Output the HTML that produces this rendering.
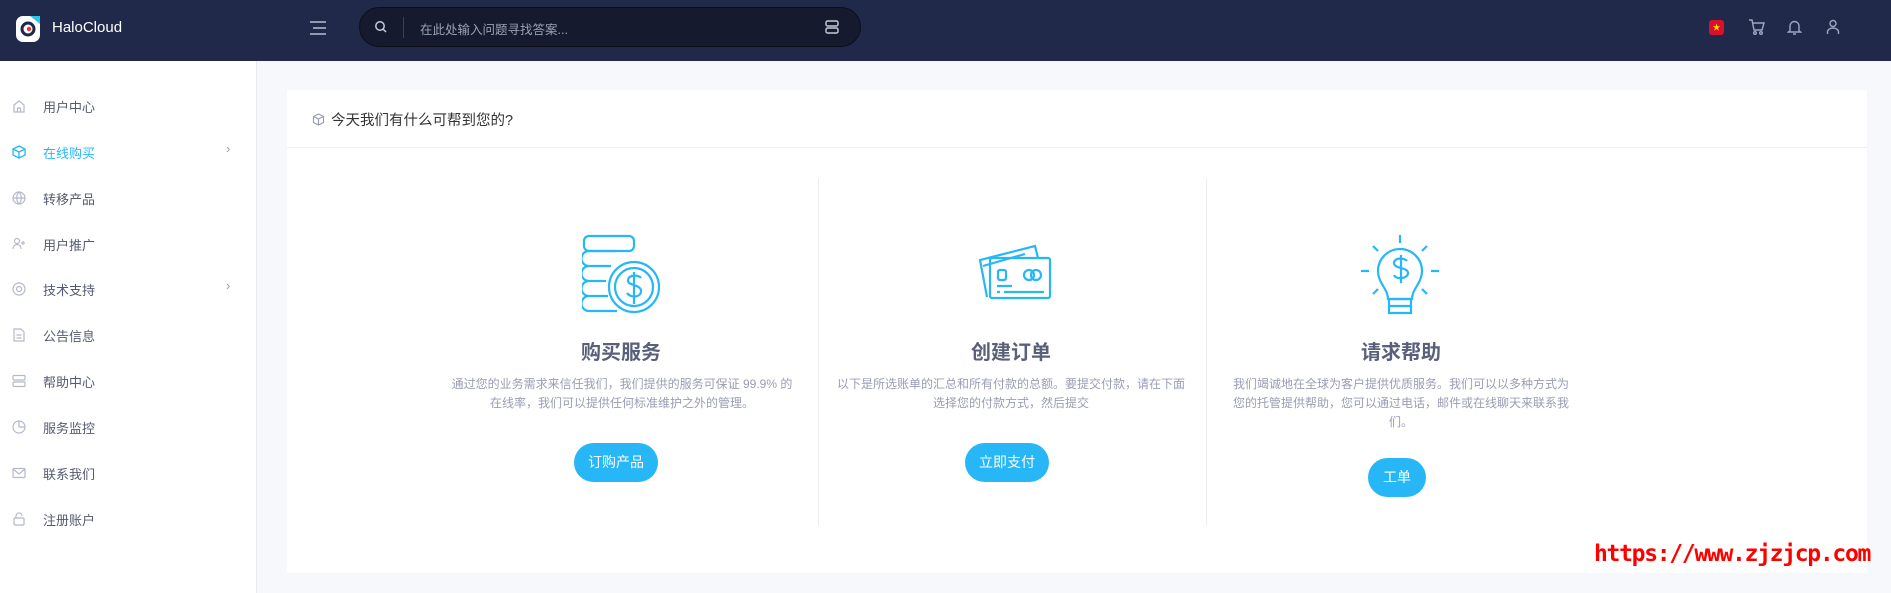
<!DOCTYPE html>
<html><head><meta charset="utf-8"><style>
*{box-sizing:border-box;margin:0;padding:0}
body{width:1891px;height:593px;overflow:hidden;background:#f7f8fb;font-family:"Liberation Sans","Noto Sans CJK SC",sans-serif;position:relative}
.hdr{position:absolute;left:0;top:0;width:1891px;height:61px;background:#21294a}
.abs{position:absolute}
.side{position:absolute;left:0;top:61px;width:257px;height:532px;background:#fff;border-right:1px solid #e9ebf0}
.it{position:absolute;left:0;height:20px;font-size:13px;color:#555a70;width:257px}
.it svg{position:absolute;left:12px;top:2px}
.it span{position:absolute;left:43px;top:0px}
.it .ch{position:absolute;left:226px;top:-2px;color:#999;font-size:13px}
.card{position:absolute;left:287px;top:90px;width:1580px;height:483px;background:#fff}
.ttl{position:absolute;font-size:20px;font-weight:bold;color:#5b607a;text-align:center;width:400px}
.desc{position:absolute;font-size:12px;color:#9a9db3;text-align:center;line-height:19px}
.btn{position:absolute;background:#27b7f7;color:#fff;font-size:14px;border-radius:20px;text-align:center;height:39px;line-height:39px}
</style></head><body>
<div class="hdr">
 <svg class="abs" style="left:16px;top:16px" width="28" height="26" viewBox="0 0 28 26"><rect x="0" y="0" width="24" height="26" rx="7" fill="#fff"/><path d="M14 0 L24 0 L24 8 Z" fill="#2ec5ea"/><circle cx="12" cy="13" r="6" fill="none" stroke="#21294a" stroke-width="3"/><circle cx="13" cy="13" r="2.2" fill="#e33"/></svg>
 <div class="abs" style="left:52px;top:19px;color:#fff;font-size:15px">HaloCloud</div>
 <svg class="abs" style="left:309px;top:19px" width="18" height="18"><path d="M1 3h16M4 9h13M1 15h16" stroke="#b9bed3" stroke-width="1.6"/></svg>
 <div class="abs" style="left:359px;top:7px;width:502px;height:40px;border-radius:20px;background:#151a2e;border:1px solid #0b0e1a"></div>
 <svg class="abs" style="left:374px;top:20px" width="14" height="14"><circle cx="6" cy="6" r="4.2" fill="none" stroke="#c7cbd9" stroke-width="1.5"/><path d="M9 9l3 3" stroke="#c7cbd9" stroke-width="1.5"/></svg>
 <div class="abs" style="left:403px;top:17px;width:1px;height:21px;background:#3a405a"></div>
 <div class="abs" style="left:420px;top:19px;color:#9ca1b6;font-size:12.5px">在此处输入问题寻找答案...</div>
 <svg class="abs" style="left:825px;top:20px" width="14" height="14"><rect x="1" y="1" width="12" height="5" rx="1.5" fill="none" stroke="#c7cbd9" stroke-width="1.4"/><rect x="1" y="8" width="12" height="5" rx="1.5" fill="none" stroke="#c7cbd9" stroke-width="1.4"/></svg>
 <div class="abs" style="left:1709px;top:20px;width:15px;height:15px;border-radius:3px;background:#d8102b;color:#ffde00;font-size:8px;line-height:15px;text-align:center">★</div>
 <svg class="abs" style="left:1748px;top:19px" width="17" height="16" fill="none" stroke="#a0a6c0" stroke-width="1.4"><path d="M1 1h3l2 10h8l2-7H5"/><circle cx="7" cy="14" r="1.3"/><circle cx="13" cy="14" r="1.3"/></svg>
 <svg class="abs" style="left:1787px;top:19px" width="15" height="16" fill="none" stroke="#a0a6c0" stroke-width="1.4"><path d="M3 12V7a4.5 4.5 0 0 1 9 0v5l1.5 1h-12z M6 15h3"/></svg>
 <svg class="abs" style="left:1826px;top:19px" width="14" height="16" fill="none" stroke="#a0a6c0" stroke-width="1.4"><circle cx="7" cy="4.5" r="3"/><path d="M1.5 15v-2a5.5 4 0 0 1 11 0v2"/></svg>
</div>
<div class="side">
 <div class="it" style="top:36px"><svg width="14" height="14" fill="none" stroke="#b5b9c8" stroke-width="1.2"><path d="M2 6l5-4 5 4v7H2zM5.5 13V9h3v4"/></svg><span>用户中心</span></div>
 <div class="it" style="top:82px;color:#27b7f7"><svg width="14" height="14" fill="none" stroke="#27b7f7" stroke-width="1.3"><path d="M7 1l6 3v6l-6 3-6-3V4zM1 4l6 3 6-3M7 7v6"/></svg><span>在线购买</span><b class="ch" style="font-weight:normal">›</b></div>
 <div class="it" style="top:128px"><svg width="14" height="14" fill="none" stroke="#b5b9c8" stroke-width="1.2"><circle cx="7" cy="7" r="6"/><path d="M1 7h12M7 1c3 3 3 9 0 12M7 1c-3 3-3 9 0 12"/></svg><span>转移产品</span></div>
 <div class="it" style="top:174px"><svg width="14" height="14" fill="none" stroke="#b5b9c8" stroke-width="1.2"><circle cx="5" cy="4" r="2.5"/><path d="M1 12c0-3 2-4.5 4-4.5s4 1.5 4 4.5M11 4v4M9 6h4"/></svg><span>用户推广</span></div>
 <div class="it" style="top:219px"><svg width="14" height="14" fill="none" stroke="#b5b9c8" stroke-width="1.2"><circle cx="7" cy="7" r="6"/><circle cx="7" cy="7" r="2.5"/></svg><span>技术支持</span><b class="ch" style="font-weight:normal">›</b></div>
 <div class="it" style="top:265px"><svg width="14" height="14" fill="none" stroke="#b5b9c8" stroke-width="1.2"><path d="M2 1h7l3 3v9H2zM4.5 7h5M4.5 10h5"/></svg><span>公告信息</span></div>
 <div class="it" style="top:311px"><svg width="14" height="14" fill="none" stroke="#b5b9c8" stroke-width="1.2"><rect x="1" y="1.5" width="12" height="4.5" rx="1"/><rect x="1" y="8" width="12" height="4.5" rx="1"/></svg><span>帮助中心</span></div>
 <div class="it" style="top:357px"><svg width="14" height="14" fill="none" stroke="#b5b9c8" stroke-width="1.2"><circle cx="7" cy="7" r="6"/><path d="M7 1v6h6"/></svg><span>服务监控</span></div>
 <div class="it" style="top:403px"><svg width="14" height="14" fill="none" stroke="#b5b9c8" stroke-width="1.2"><rect x="1" y="2.5" width="12" height="9" rx="1"/><path d="M1 3l6 5 6-5"/></svg><span>联系我们</span></div>
 <div class="it" style="top:449px"><svg width="14" height="14" fill="none" stroke="#b5b9c8" stroke-width="1.2"><rect x="2" y="6" width="10" height="7" rx="1"/><path d="M4 6V4a3 3 0 0 1 6 0"/></svg><span>注册账户</span></div>
</div>
<div class="card">
 <svg class="abs" style="left:25px;top:23px" width="13" height="13" fill="none" stroke="#9a9fb3" stroke-width="1.2"><path d="M6.5 1l5 2.5v6l-5 2.5-5-2.5v-6zM1.5 3.5l5 2.5 5-2.5M6.5 6v6"/></svg>
 <div class="abs" style="left:44px;top:19px;font-size:14.5px;color:#333">今天我们有什么可帮到您的?</div>
 <div class="abs" style="left:0;top:57px;width:1580px;height:1px;background:#eef0f3"></div>
 <div class="abs" style="left:531px;top:88px;width:1px;height:348px;background:#eceef2"></div>
 <div class="abs" style="left:919px;top:88px;width:1px;height:348px;background:#eceef2"></div>
 <svg class="abs" style="left:295px;top:144px" width="80" height="80" fill="none" stroke="#27b7f7" stroke-width="2.2"><rect x="2" y="2" width="50" height="15" rx="5"/><path d="M34 17H7a5 5 0 0 0 0 15h22M26 32H7a5 5 0 0 0 0 15h17M24 47H7a5 5 0 0 0 0 15h17M26 62H7a5 5 0 0 0 0 15h28"/><circle cx="52" cy="53" r="25"/><circle cx="52" cy="53" r="19"/><path d="M59 44c-2-3-12-4-13 2s13 4 13 11-11 7-14 2M52 38v32"/></svg>
 <div class="ttl" style="left:134px;top:246px">购买服务</div>
 <div class="desc" style="left:160px;top:285px;width:350px">通过您的业务需求来信任我们，我们提供的服务可保证 99.9% 的在线率，我们可以提供任何标准维护之外的管理。</div>
 <div class="btn" style="left:287px;top:353px;width:84px">订购产品</div>
 <svg class="abs" style="left:683px;top:152px" width="82" height="62" fill="none" stroke="#27b7f7" stroke-width="2.2"><path d="M17 55 L10 18 L65 4 L68 16"/><path d="M13 24 L55 12"/><rect x="20" y="16" width="60" height="40" rx="2"/><rect x="28" y="28" width="8" height="10" rx="2"/><circle cx="59" cy="33" r="5"/><circle cx="66" cy="33" r="5"/><path d="M27 44h15M27 50h3M34 50h40"/></svg>
 <div class="ttl" style="left:524px;top:246px">创建订单</div>
 <div class="desc" style="left:548px;top:285px;width:352px">以下是所选账单的汇总和所有付款的总额。要提交付款，请在下面选择您的付款方式，然后提交</div>
 <div class="btn" style="left:678px;top:353px;width:84px">立即支付</div>
 <svg class="abs" style="left:1073px;top:144px" width="80" height="82" fill="none" stroke="#27b7f7" stroke-width="2.2"><path d="M40 1v8M13 12l5 5M67 12l-5 5M1 37h8M71 37h8M13 60l5-5M67 60l-5-5"/><path d="M28 65c0-10-10-16-10-28a22 22 0 0 1 44 0c0 12-10 18-10 28z"/><path d="M29 65h22v14H29zM29 72h22"/><path d="M47 27c-2-3-13-4-13 2s14 4 14 10-12 7-14 2M41 21v28"/></svg>
 <div class="ttl" style="left:914px;top:246px">请求帮助</div>
 <div class="desc" style="left:944px;top:285px;width:340px">我们竭诚地在全球为客户提供优质服务。我们可以以多种方式为您的托管提供帮助，您可以通过电话，邮件或在线聊天来联系我们。</div>
 <div class="btn" style="left:1081px;top:368px;width:58px">工单</div>
</div>
<div class="abs" style="left:1594px;top:541px;color:#f00;font-size:23px;font-weight:bold;font-family:'DejaVu Sans Mono','Liberation Mono',monospace;letter-spacing:-1.3px">https://www.zjzjcp.com</div>
</body></html>
